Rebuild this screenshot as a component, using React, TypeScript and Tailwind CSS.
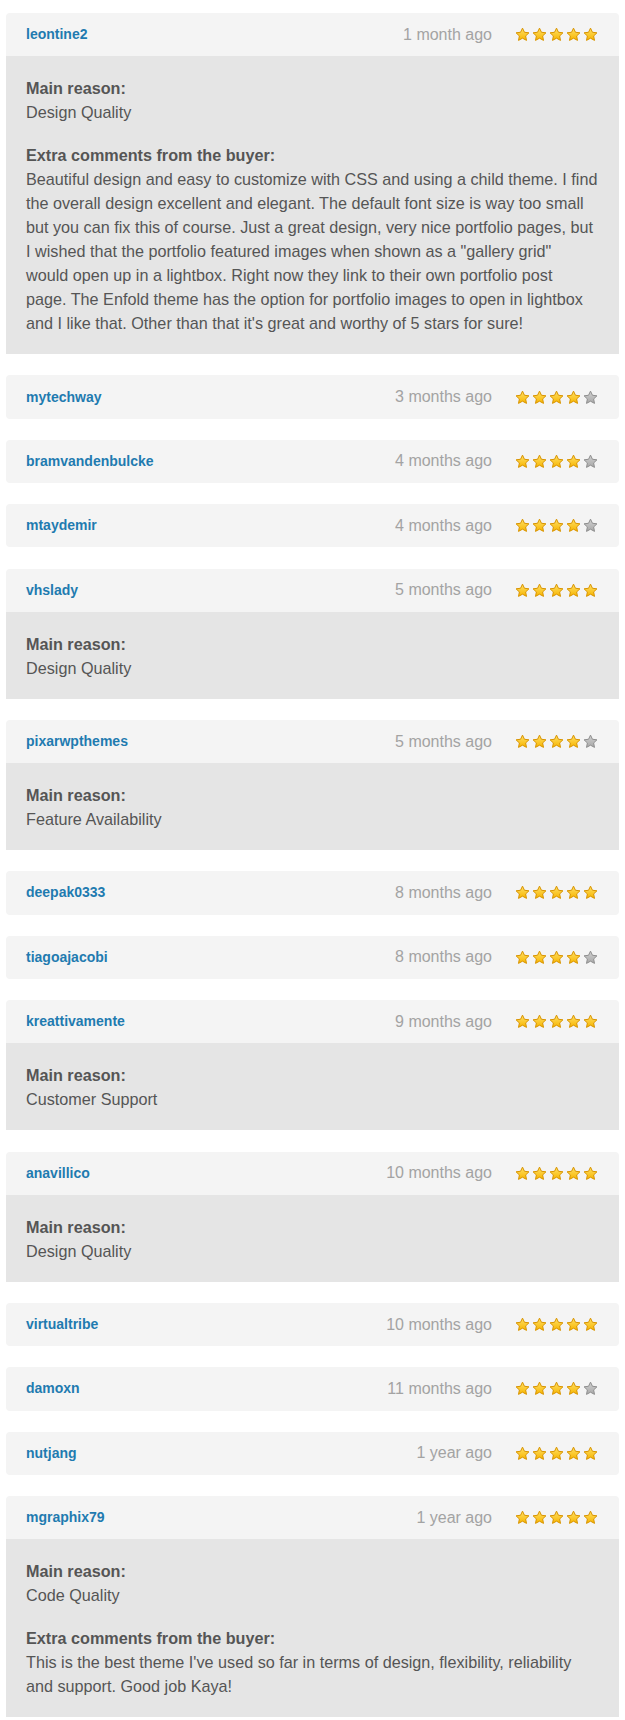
import React from "react";

type Review = {
  user: string;
  when: string;
  stars: number;
  reason?: string;
  comment?: string[];
};

const reviews: Review[] = [
  {
    user: "leontine2",
    when: "1 month ago",
    stars: 5,
    reason: "Design Quality",
    comment: [
      "Beautiful design and easy to customize with CSS and using a child theme. I find",
      "the overall design excellent and elegant. The default font size is way too small",
      "but you can fix this of course. Just a great design, very nice portfolio pages, but",
      "I wished that the portfolio featured images when shown as a \"gallery grid\"",
      "would open up in a lightbox. Right now they link to their own portfolio post",
      "page. The Enfold theme has the option for portfolio images to open in lightbox",
      "and I like that. Other than that it's great and worthy of 5 stars for sure!",
    ],
  },
  { user: "mytechway", when: "3 months ago", stars: 4 },
  { user: "bramvandenbulcke", when: "4 months ago", stars: 4 },
  { user: "mtaydemir", when: "4 months ago", stars: 4 },
  { user: "vhslady", when: "5 months ago", stars: 5, reason: "Design Quality" },
  { user: "pixarwpthemes", when: "5 months ago", stars: 4, reason: "Feature Availability" },
  { user: "deepak0333", when: "8 months ago", stars: 5 },
  { user: "tiagoajacobi", when: "8 months ago", stars: 4 },
  { user: "kreattivamente", when: "9 months ago", stars: 5, reason: "Customer Support" },
  { user: "anavillico", when: "10 months ago", stars: 5, reason: "Design Quality" },
  { user: "virtualtribe", when: "10 months ago", stars: 5 },
  { user: "damoxn", when: "11 months ago", stars: 4 },
  { user: "nutjang", when: "1 year ago", stars: 5 },
  {
    user: "mgraphix79",
    when: "1 year ago",
    stars: 5,
    reason: "Code Quality",
    comment: [
      "This is the best theme I've used so far in terms of design, flexibility, reliability",
      "and support. Good job Kaya!",
    ],
  },
];

const Star = ({ on }: { on: boolean }) => (
  <svg width="15" height="15" viewBox="0 0 24 24">
    <defs>
      <linearGradient id="sy" x1="0" y1="0" x2="0" y2="1">
        <stop offset="0" stopColor="#ffe066" />
        <stop offset="1" stopColor="#f7b500" />
      </linearGradient>
      <linearGradient id="sg" x1="0" y1="0" x2="0" y2="1">
        <stop offset="0" stopColor="#d0d0d0" />
        <stop offset="1" stopColor="#a8a8a8" />
      </linearGradient>
    </defs>
    <path
      d="M12 1.8l3.1 6.6 7.2.9-5.3 5 1.4 7.1L12 17.9l-6.4 3.5 1.4-7.1-5.3-5 7.2-.9z"
      fill={on ? "url(#sy)" : "url(#sg)"}
      stroke={on ? "#d99400" : "#8f8f8f"}
      strokeWidth="1.6"
      strokeLinejoin="round"
    />
  </svg>
);

const ReviewCard = ({ r }: { r: Review }) => {
  const hasBody = !!r.reason;
  return (
    <div className="mb-[21.1px]">
      <div
        className={
          "flex h-[43.3px] items-center justify-between bg-[#f4f4f4] pl-5 pr-[21px] " +
          (hasBody ? "rounded-t-[4px]" : "rounded-[4px]")
        }
      >
        <span className="text-[14px] font-bold text-[#1f7bb0]">{r.user}</span>
        <div className="flex items-center gap-[23px]">
          <span className="text-[16px] text-[#a3a3a3]">{r.when}</span>
          <div className="flex gap-[2px]">
            {[0, 1, 2, 3, 4].map((i) => (
              <Star key={i} on={i < r.stars} />
            ))}
          </div>
        </div>
      </div>
      {hasBody && (
        <div className="bg-[#e5e5e5] pb-[19px] pl-5 pr-[14px] pt-5 text-[16.2px] leading-[24px] text-[#555]">
          <p className="font-bold">Main reason:</p>
          <p>{r.reason}</p>
          {r.comment && (
            <>
              <p className="mt-[19px] font-bold">Extra comments from the buyer:</p>
              <p>
                {r.comment.map((line, i) => (
                  <span key={i} className="block">
                    {line}
                  </span>
                ))}
              </p>
            </>
          )}
        </div>
      )}
    </div>
  );
};

export default function App() {
  return (
    <div className="min-h-[1720px] bg-white px-[6px] pt-[13px] font-['Liberation_Sans',Arial,sans-serif]">
      {reviews.map((r) => (
        <ReviewCard key={r.user} r={r} />
      ))}
    </div>
  );
}
